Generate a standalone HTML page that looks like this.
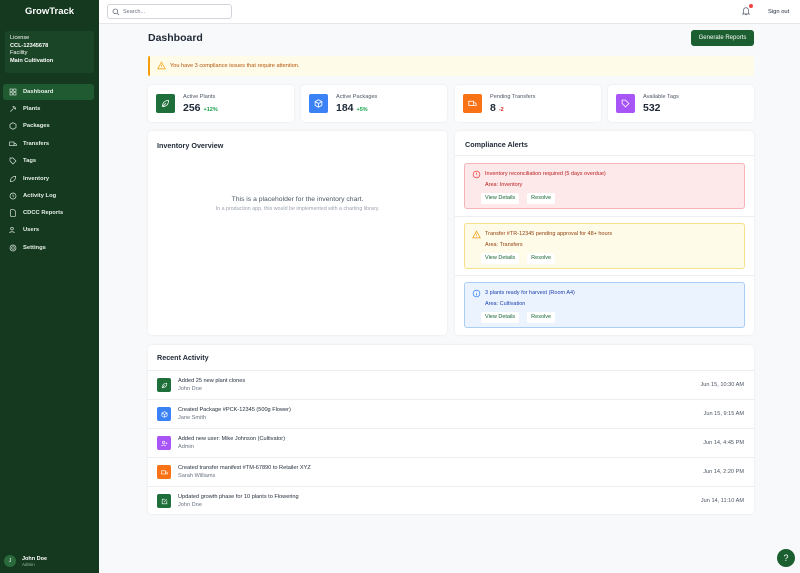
<!DOCTYPE html>
<html><head><meta charset="utf-8"><style>
*{box-sizing:border-box;margin:0;padding:0}
body{width:800px;height:573px;overflow:hidden;font-family:"Liberation Sans",sans-serif;background:#f8f9fa;position:relative;color:#1f2937}
.sb{position:absolute;left:0;top:0;width:99px;height:573px;background:#14391f;color:#fff}
.sb .logo{position:absolute;top:6px;width:99px;text-align:center;font-weight:bold;font-size:9.5px}
.lic{position:absolute;left:5px;top:31px;width:89px;height:42px;background:#1b4527;border-radius:3px;padding:4px 5px;font-size:5.6px;line-height:7.5px}
.lic b{display:block}
.nav{position:absolute;left:3px;width:91px;height:16px;font-size:5.8px;font-weight:bold;display:flex;align-items:center;padding-left:6px;border-radius:3px;color:#e5efe8}
.nav svg{width:8px;height:8px;margin-right:6px;fill:none;stroke:#dfe9e2;stroke-width:2}
.nav.act{background:#1f5a30}
.user{position:absolute;left:4px;top:555px;display:flex;align-items:center;font-size:5.5px}
.av{width:12px;height:12px;border-radius:50%;background:#2a6a3c;font-size:5px;display:flex;align-items:center;justify-content:center;margin-right:6px}
.hdr{position:absolute;left:99px;top:0;right:0;height:24px;background:#fff;border-bottom:1px solid #e5e7eb}
.search{position:absolute;left:8px;top:4px;width:125px;height:15px;border:1px solid #d1d5db;border-radius:3px;font-size:5.5px;color:#6b7280;padding:4px 0 0 15px}
.card{position:absolute;background:#fff;border-radius:4px;box-shadow:0 0 2px rgba(0,0,0,.08)}
.stat .ic{position:absolute;left:8px;top:9px;width:19px;height:19px;border-radius:2px;padding:5px}
.stat .l{position:absolute;left:35px;top:9px;font-size:5.6px;color:#4b5563}
.stat .v{position:absolute;left:35px;top:17px;font-size:10.5px;font-weight:bold;color:#1f2937}
.stat .v span{font-size:5.5px;color:#16a34a;margin-left:3px}
.ct{font-size:7.2px;font-weight:bold;color:#1f2937}
.al{position:absolute;left:9px;width:281px;height:46px;border-radius:3px;font-size:5.5px;padding:5px 0 0 20px;line-height:11px}
.al svg.a{position:absolute;left:7px;top:6px;width:9px;height:9px;fill:none;stroke-width:2}
.btn{display:inline-block;background:#fff;border-radius:2px;padding:0 4px;margin:2px 3px 0 -4px;color:#166534;line-height:11px}
.row{position:absolute;left:0;width:606px;height:29px;border-top:1px solid #eceef1;font-size:5.6px}
.row .ic{position:absolute;left:9px;top:7px;width:14px;height:14px;border-radius:2px;padding:3.5px}
.row .t{position:absolute;left:30px;top:7px;color:#1f2937}
.row .s{position:absolute;left:30px;top:15px;color:#6b7280}
.row .d{position:absolute;right:10px;top:11px;color:#4b5563}
.ic svg{width:100%;height:100%;display:block;fill:none;stroke:#fff;stroke-width:2.2}
</style></head><body>
<div class="sb">
<div class="logo">GrowTrack</div>
<div class="lic">License<b>CCL-12345678</b>Facility<b>Main Cultivation</b></div>
<div class="nav act" style="top:84px"><svg viewBox="0 0 24 24"><rect x="3" y="3" width="7" height="7"/><rect x="14" y="3" width="7" height="7"/><rect x="3" y="14" width="7" height="7"/><rect x="14" y="14" width="7" height="7"/></svg>Dashboard</div>
<div class="nav" style="top:101px"><svg viewBox="0 0 24 24"><path d="M4 20l8-8M12 4c4 0 8 4 8 8-4 0-8-4-8-8z"/></svg>Plants</div>
<div class="nav" style="top:118px"><svg viewBox="0 0 24 24"><path d="M12 2l9 5v10l-9 5-9-5V7z"/></svg>Packages</div>
<div class="nav" style="top:136px"><svg viewBox="0 0 24 24"><rect x="2" y="6" width="13" height="11"/><path d="M15 10h4l3 3v4h-7"/></svg>Transfers</div>
<div class="nav" style="top:153px"><svg viewBox="0 0 24 24"><path d="M3 3h9l9 9-9 9-9-9z"/></svg>Tags</div>
<div class="nav" style="top:171px"><svg viewBox="0 0 24 24"><path d="M4 20C4 10 10 4 20 4c0 10-6 16-16 16z"/></svg>Inventory</div>
<div class="nav" style="top:188px"><svg viewBox="0 0 24 24"><circle cx="12" cy="12" r="9"/><path d="M12 7v5l3 2"/></svg>Activity Log</div>
<div class="nav" style="top:205px"><svg viewBox="0 0 24 24"><path d="M5 2h10l4 4v16H5z"/></svg>CDCC Reports</div>
<div class="nav" style="top:222px"><svg viewBox="0 0 24 24"><circle cx="9" cy="8" r="4"/><path d="M2 21c0-5 14-5 14 0"/></svg>Users</div>
<div class="nav" style="top:240px"><svg viewBox="0 0 24 24"><circle cx="12" cy="12" r="4"/><circle cx="12" cy="12" r="9"/></svg>Settings</div>
<div class="user"><div class="av">J</div><div><b>John Doe</b><div style="color:#9fb7a6;font-size:4.5px">Admin</div></div></div>
</div>
<div class="hdr"><div class="search"><svg style="position:absolute;left:4px;top:3px;width:8px;height:8px" viewBox="0 0 24 24" fill="none" stroke="#6b7280" stroke-width="2.5"><circle cx="10" cy="10" r="7"/><path d="M15 15l6 6"/></svg>Search...</div>
<svg style="position:absolute;left:642px;top:6px;width:10px;height:10px" viewBox="0 0 24 24" fill="none" stroke="#6b7280" stroke-width="2"><path d="M6 17V10a6 6 0 0112 0v7l2 2H4zM10 21h4"/></svg>
<div style="position:absolute;left:650px;top:4px;width:4px;height:4px;border-radius:50%;background:#ef4444"></div>
<div style="position:absolute;left:669px;top:9px;font-size:5.8px;color:#1f2937">Sign out</div></div>
<div style="position:absolute;left:148px;top:32px;font-size:10.5px;font-weight:bold">Dashboard</div>
<div style="position:absolute;left:691px;top:30px;width:63px;height:16px;background:#1b5e2f;border-radius:3px;color:#fff;font-size:6px;text-align:center;line-height:16px;white-space:nowrap">Generate Reports</div>
<div style="position:absolute;left:148px;top:56px;width:606px;height:20px;background:#fefbe8;border-left:2px solid #f59e0b;border-radius:2px;font-size:5.6px;color:#b45309;padding:7px 0 0 20px">You have 3 compliance issues that require attention.<svg style="position:absolute;left:7px;top:5px;width:9px;height:9px" viewBox="0 0 24 24" fill="none" stroke="#f59e0b" stroke-width="2"><path d="M12 3l10 18H2zM12 10v5M12 18v1"/></svg></div>
<div class="card stat" style="left:148px;top:85px;width:146px;height:37px"><div class="ic" style="background:#1f6f3a"><svg viewBox="0 0 24 24"><path d="M4 20C4 10 10 4 20 4c0 10-6 16-16 16zM4 20l9-9"/></svg></div><div class="l">Active Plants</div><div class="v">256<span>+12%</span></div></div>
<div class="card stat" style="left:301px;top:85px;width:146px;height:37px"><div class="ic" style="background:#3b82f6"><svg viewBox="0 0 24 24"><path d="M12 2l9 5v10l-9 5-9-5V7zM3 7l9 5 9-5M12 12v10"/></svg></div><div class="l">Active Packages</div><div class="v">184<span>+5%</span></div></div>
<div class="card stat" style="left:455px;top:85px;width:146px;height:37px"><div class="ic" style="background:#f97316"><svg viewBox="0 0 24 24"><rect x="2" y="6" width="13" height="11"/><path d="M15 10h4l3 3v4h-7"/></svg></div><div class="l">Pending Transfers</div><div class="v">8<span style="color:#dc2626">-2</span></div></div>
<div class="card stat" style="left:608px;top:85px;width:146px;height:37px"><div class="ic" style="background:#a855f7"><svg viewBox="0 0 24 24"><path d="M3 3h9l9 9-9 9-9-9z"/></svg></div><div class="l">Available Tags</div><div class="v">532</div></div>
<div class="card" style="left:148px;top:131px;width:299px;height:204px"><div class="ct" style="position:absolute;left:9px;top:10px">Inventory Overview</div>
<div style="position:absolute;top:65px;width:100%;text-align:center;font-size:6.8px;color:#4b5563">This is a placeholder for the inventory chart.</div>
<div style="position:absolute;top:75px;width:100%;text-align:center;font-size:5.3px;color:#9ca3af">In a production app, this would be implemented with a charting library.</div></div>
<div class="card" style="left:455px;top:131px;width:299px;height:204px"><div class="ct" style="position:absolute;left:10px;top:9px">Compliance Alerts</div>
<div style="position:absolute;top:24px;left:0;right:0;border-top:1px solid #eceef1"></div>
<div class="al" style="top:32px;background:#fee9ea;border:1px solid #f5b5b8;color:#b91c1c"><svg class="a" viewBox="0 0 24 24" stroke="#ef4444"><circle cx="12" cy="12" r="9"/><path d="M12 7v6M12 16v1"/></svg>Inventory reconciliation required (5 days overdue)<br>Area: Inventory<br><span class="btn">View Details</span><span class="btn" style="margin-left:5px">Resolve</span></div>
<div style="position:absolute;top:85px;left:0;right:0;border-top:1px solid #eceef1"></div>
<div class="al" style="top:92px;background:#fefbe8;border:1px solid #f8df8a;color:#92400e"><svg class="a" viewBox="0 0 24 24" stroke="#f59e0b"><path d="M12 3l10 18H2zM12 10v5M12 18v1"/></svg>Transfer #TR-12345 pending approval for 48+ hours<br>Area: Transfers<br><span class="btn">View Details</span><span class="btn" style="margin-left:5px">Resolve</span></div>
<div style="position:absolute;top:144px;left:0;right:0;border-top:1px solid #eceef1"></div>
<div class="al" style="top:151px;background:#ebf4fe;border:1px solid #a9cdf5;color:#1e40af"><svg class="a" viewBox="0 0 24 24" stroke="#3b82f6"><circle cx="12" cy="12" r="9"/><path d="M12 11v6M12 7v1"/></svg>3 plants ready for harvest (Room A4)<br>Area: Cultivation<br><span class="btn">View Details</span><span class="btn" style="margin-left:5px">Resolve</span></div></div>
<div class="card" style="left:148px;top:345px;width:606px;height:169px"><div class="ct" style="position:absolute;left:9px;top:8px">Recent Activity</div>
<div class="row" style="top:25px"><div class="ic" style="background:#1f6f3a"><svg viewBox="0 0 24 24"><path d="M4 20C4 10 10 4 20 4c0 10-6 16-16 16zM4 20l9-9"/></svg></div><div class="t">Added 25 new plant clones</div><div class="s">John Doe</div><div class="d">Jun 15, 10:30 AM</div></div>
<div class="row" style="top:54px"><div class="ic" style="background:#3b82f6"><svg viewBox="0 0 24 24"><path d="M12 2l9 5v10l-9 5-9-5V7zM3 7l9 5 9-5M12 12v10"/></svg></div><div class="t">Created Package #PCK-12345 (500g Flower)</div><div class="s">Jane Smith</div><div class="d">Jun 15, 9:15 AM</div></div>
<div class="row" style="top:83px"><div class="ic" style="background:#a855f7"><svg viewBox="0 0 24 24"><circle cx="9" cy="8" r="4"/><path d="M2 21c0-5 14-5 14 0M19 8v6M16 11h6"/></svg></div><div class="t">Added new user: Mike Johnson (Cultivator)</div><div class="s">Admin</div><div class="d">Jun 14, 4:45 PM</div></div>
<div class="row" style="top:112px"><div class="ic" style="background:#f97316"><svg viewBox="0 0 24 24"><rect x="2" y="6" width="13" height="11"/><path d="M15 10h4l3 3v4h-7"/></svg></div><div class="t">Created transfer manifest #TM-67890 to Retailer XYZ</div><div class="s">Sarah Williams</div><div class="d">Jun 14, 2:20 PM</div></div>
<div class="row" style="top:141px"><div class="ic" style="background:#1f6f3a"><svg viewBox="0 0 24 24"><path d="M4 4h10M4 4v16h16V10M10 14l10-10"/></svg></div><div class="t">Updated growth phase for 10 plants to Flowering</div><div class="s">John Doe</div><div class="d">Jun 14, 11:10 AM</div></div></div>
<div style="position:absolute;left:777px;top:549px;width:18px;height:18px;border-radius:50%;background:#1b5e2f;color:#fff;font-size:9px;text-align:center;line-height:18px">?</div>
</body></html>
